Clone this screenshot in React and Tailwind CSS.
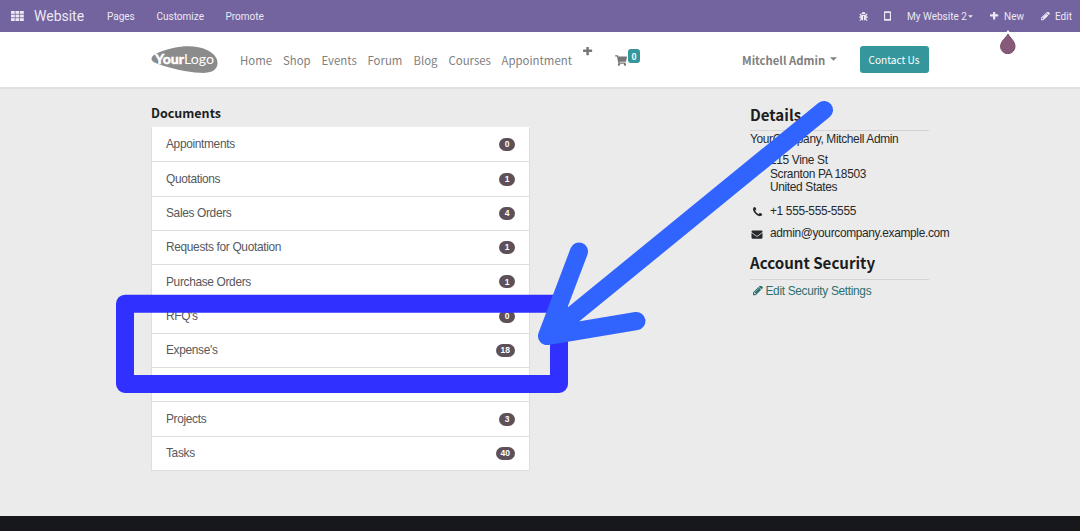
import React from "react";
import { FaBug, FaShoppingCart, FaEnvelope } from "react-icons/fa";

const PENCIL =
  "M363 1408l91-91-235-235-91 91v107h128v128h107zm523-928q0-22-22-22-10 0-17 7l-542 542q-7 7-7 17 0 22 22 22 10 0 17-7l542-542q7-7 7-17zm-54-192l416 416-832 832h-416v-416zm683 96q0 53-37 90l-166 166-416-416 166-165q36-38 90-38 53 0 91 38l235 234q37 39 37 91z";
const PLUS =
  "M1408 608v192q0 40-28 68t-68 28h-416v416q0 40-28 68t-68 28h-192q-40 0-68-28t-28-68v-416h-416q-40 0-68-28t-28-68v-192q0-40 28-68t68-28h416v-416q0-40 28-68t68-28h192q40 0 68 28t28 68v416h416q40 0 68 28t28 68z";
const PHONE =
  "M1408 1240q0 27-10 70.5t-21 68.5q-21 50-122 106-94 51-186 51-27 0-52.5-3.5t-57.5-12.5-47.5-14.5-55.5-20.5-49-18q-98-35-175-83-128-79-264.5-215.5t-215.5-264.5q-48-77-83-175-3-9-18-49t-20.5-55.5-14.5-47.5-12.5-57.5-3.5-52.5q0-92 51-186 56-101 106-122 25-11 68.5-21t70.5-10q14 0 21 3 18 6 53 76 11 19 30 54t35 63.5 31 53.5q3 4 17.5 25t21.5 35.5 7 28.5q0 20-28.5 50t-62 55-62 53-28.5 46q0 9 5 22.5t8.5 20.5 14 24 11.5 19q76 137 174 235t235 174q2 1 19 11.5t24 14 20.5 8.5 22.5 5q18 0 46-28.5t53-62 55-62 50-28.5q14 0 28.5 7t35.5 21.5 25 17.5q25 15 53.5 31t63.5 35 54 30q70 35 76 53 3 7 3 21z";

function Glyph({ d, className }) {
  return (
    <svg viewBox="0 128 1536 1536" fill="currentColor" className={className}>
      <path d={d} />
    </svg>
  );
}

function Caret({ className }) {
  return (
    <svg viewBox="0 0 8 4" fill="currentColor" className={className}>
      <path d="M0 0h8L4 4z" />
    </svg>
  );
}

function TopBar() {
  return (
    <div className="flex h-8 items-center bg-[#73639e] font-[Roboto,sans-serif] text-[10px] leading-none text-[#ece9f5]">
      <svg viewBox="0 0 13 10" fill="currentColor" className="ml-[11px] h-[10px] w-[13px] shrink-0">
        {[0, 4.5, 9].map((x) =>
          [0, 3.6, 7.2].map((y) => <rect key={`${x}-${y}`} x={x} y={y} width="3.8" height="2.8" />)
        )}
      </svg>
      <span className="ml-[10px] w-[50px] whitespace-nowrap text-[14px]">Website</span>
      <span className="ml-[23px] mt-px w-[49.500px]">Pages</span>
      <span className="mt-px w-[69px]">Customize</span>
      <span className="mt-px">Promote</span>
      <div className="ml-auto flex items-center">
        <FaBug className="mr-[16px] h-[9px] w-[9px]" />
        <svg viewBox="0 0 8 11" className="mr-[16px] h-[10px] w-[7px]">
          <path fillRule="evenodd" fill="currentColor" d="M1 0h6q1 0 1 1v9q0 1-1 1H1q-1 0-1-1V1q0-1 1-1zM1.3 2v6.8h5.4V2z" />
        </svg>
        <span className="mt-px w-[61px] whitespace-nowrap">My Website 2</span>
        <Caret className="mr-[17px] h-[3px] w-[5px]" />
        <Glyph d={PLUS} className="mr-[5px] h-[9px] w-[9px]" />
        <span className="mr-[16px] mt-px w-[21px]">New</span>
        <Glyph d={PENCIL} className="mr-[5px] h-[9px] w-[9px]" />
        <span className="mt-px w-[25px]">Edit</span>
      </div>
    </div>
  );
}

function Logo() {
  return (
    <svg viewBox="0 0 68 30" className="h-[30px] w-[68px] shrink-0">
      <path fill="#8b8b8b" d="M0.5 13.5C1 9 12 5.500 22 3C34 0.200 47 0.500 56 5C64 9 67 14 66.500 19C66 25.500 59 28.500 49 27.800C36 27 20 23.500 10 20C4 18 0.300 16.500 0.500 13.500Z" />
      <text x="4" y="18.500" fill="#fff" stroke="#fff" strokeWidth="0.4" fontFamily="Lato, sans-serif" fontWeight="900" fontSize="14" textLength="29" lengthAdjust="spacingAndGlyphs">Your</text>
      <text x="33" y="18.500" fill="#fff" fontFamily="Lato, sans-serif" fontWeight="400" fontSize="14" textLength="30" lengthAdjust="spacingAndGlyphs">Logo</text>
    </svg>
  );
}

const LINKS = [
  ["Home", "w-[43px]"],
  ["Shop", "w-[38.500px]"],
  ["Events", "w-[46px]"],
  ["Forum", "w-[46px]"],
  ["Blog", "w-[35px]"],
  ["Courses", "w-[53px]"],
  ["Appointment", "w-[81px]"],
];

function Header() {
  return (
    <div className="flex h-[57px] items-center border-b-2 border-[#e0e0e0] bg-white pl-[151px] font-['Noto_Sans_CJK_SC',sans-serif] text-[11.4px] leading-4 text-[#808080]">
      <Logo />
      <div className="ml-[21px] flex">
        {LINKS.map(([label, width]) => (
          <span key={label} className={`${width} whitespace-nowrap`}>{label}</span>
        ))}
      </div>
      <Glyph d={PLUS} className="mb-[15px] h-[10px] w-[10px] text-[#777]" />
      <FaShoppingCart className="ml-[22px] mt-px h-[11px] w-[12px] text-[#777]" />
      <span className="mb-[7px] ml-[1.500px] flex h-[14px] w-[12px] items-center justify-center rounded-[3px] bg-[#35979c] text-[8.500px] font-bold text-white">0</span>
      <span className="ml-[102px] w-[88px] whitespace-nowrap text-[11.300px] font-bold">Mitchell Admin</span>
      <Caret className="mb-[2px] h-[4px] w-[7px]" />
      <button className="ml-[22.500px] h-[27px] w-[69px] whitespace-nowrap rounded-[3px] bg-[#35979c] text-[10.100px] leading-4 text-white">Contact Us</button>
    </div>
  );
}

const DOCS = [
  ["Appointments", 0],
  ["Quotations", 1],
  ["Sales Orders", 4],
  ["Requests for Quotation", 1],
  ["Purchase Orders", 1],
  ["RFQ's", 0],
  ["Expense's", 18],
  null,
  ["Projects", 3],
  ["Tasks", 40],
];

function Documents() {
  return (
    <section className="w-[379px]">
      <h3 className="mt-[15px] h-[23px] font-['Noto_Sans_CJK_SC',sans-serif] text-[12.500px] font-bold leading-[18px] text-[#1b1d20]">Documents</h3>
      <div className="border border-[#dedede] border-t-white bg-white">
        {DOCS.map((doc, i) => (
          <div key={i} className="flex h-[34.300px] items-center justify-between border-b border-[#dedede] px-[14px] pt-[1.200px] text-[11.900px] tracking-[-0.330px] text-[#55585c] last:h-[33.300px] last:border-b-0">
            {doc && <span>{doc[0]}</span>}
            {doc && (
              <span className="mb-px flex h-[13px] min-w-[16px] items-center justify-center rounded-full bg-[#5e5058] px-[5px] text-[8.500px] font-bold tracking-normal text-white">{doc[1]}</span>
            )}
          </div>
        ))}
      </div>
    </section>
  );
}

function Details() {
  return (
    <aside className="ml-[220px] w-[179px] text-[11.900px] leading-[13.300px] tracking-[-0.330px] text-[#26292c]">
      <h3 className="mt-[14px] h-[28px] border-b border-[#d4d4d4] font-['Noto_Sans_CJK_SC',sans-serif] text-[15.100px] font-bold leading-[22px] tracking-normal text-[#1b1d20]">Details</h3>
      <p className="mt-[2px]">YourCompany, Mitchell Admin</p>
      <p className="ml-[20px] mt-[8px]">215 Vine St<br />Scranton PA 18503<br />United States</p>
      <div className="mt-[11px] flex items-center">
        <Glyph d={PHONE} className="ml-[3px] mr-[7px] h-[10px] w-[10px]" />
        <span>+1 555-555-5555</span>
      </div>
      <div className="mt-[9px] flex items-center whitespace-nowrap">
        <FaEnvelope className="ml-[1px] mr-[7px] h-[11px] w-[12px] shrink-0" />
        <span>admin@yourcompany.example.com</span>
      </div>
      <h3 className="mt-[10px] h-[29px] border-b border-[#d4d4d4] font-['Noto_Sans_CJK_SC',sans-serif] text-[15.100px] font-bold leading-[23px] tracking-normal text-[#1b1d20]">Account Security</h3>
      <div className="mt-[5px] flex items-center whitespace-nowrap text-[#2c716f]">
        <Glyph d={PENCIL} className="ml-[3px] mr-[2.500px] h-[10px] w-[10px]" />
        <span>Edit Security Settings</span>
      </div>
    </aside>
  );
}

export default function App() {
  return (
    <div className="relative flex h-[531px] w-[1080px] flex-col overflow-hidden bg-[#ebebeb] font-['Liberation_Sans',Arial,sans-serif]">
      <TopBar />
      <Header />
      <main className="flex flex-1 items-start pl-[151px]">
        <Documents />
        <Details />
      </main>
      <footer className="h-[15px] bg-[#17181b]" />
      <svg viewBox="0 0 18 24" className="absolute left-[999px] top-[30px] h-6 w-[18px]">
        <path d="M9 0l3 4H6z" fill="#fff" />
        <path d="M9 4C11 8 16 11 16 16.500a7.200 7.200 0 0 1-14.400 0C1.600 11 7 8 9 4z" fill="#875a7b" stroke="#714b67" />
      </svg>
      <svg viewBox="0 0 1080 531" className="pointer-events-none absolute inset-0 h-full w-full" fill="none">
        <rect x="125" y="303.700" width="434" height="80.300" stroke="#3030ff" strokeWidth="18" strokeLinejoin="round" />
        <path d="M824 110L547 336M579 251.500L547 336L636.500 321" stroke="#3163ff" strokeWidth="18" strokeLinecap="round" strokeLinejoin="round" />
      </svg>
    </div>
  );
}
